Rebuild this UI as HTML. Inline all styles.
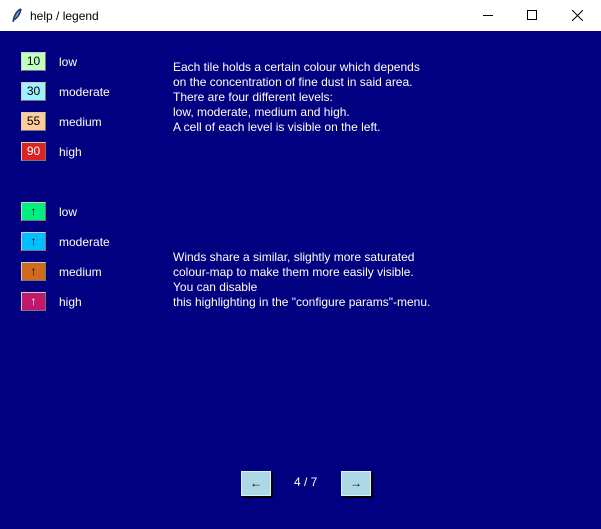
<!DOCTYPE html>
<html><head><style>
*{margin:0;padding:0;box-sizing:border-box}
body{width:601px;height:529px;background:#000080;font-family:"Liberation Sans",sans-serif;position:relative;overflow:hidden;color:#fff}
.title{position:absolute;left:0;top:0;width:601px;height:31px;background:#fff;color:#000;font-size:12px}
.title .t{position:absolute;left:30px;top:9px}
.tile{position:absolute;left:21px;width:25px;height:19px;border:1px solid #ccc;border-right-color:#777;border-bottom-color:#777;color:#000;font-size:12px;text-align:center;line-height:17px}
.lbl{position:absolute;left:59px;font-size:12px;line-height:14px}
.txt{position:absolute;left:173px;font-size:12px;line-height:15px;white-space:pre}
.btn{position:absolute;top:471px;width:30px;height:25px;background:#add8e6;border:1px solid #e0f0f8;box-shadow:1px 1px 0 #000,2px 2px 0 #000;color:#000;font-size:12px;text-align:center;line-height:22px}
</style></head><body>
<div class="title">
<svg style="position:absolute;left:11px;top:8px" width="12" height="15" viewBox="0 0 12 15"><path d="M10 1 C5 3 3 8 2 14 M10 1 C9 6 6 10 3 12" stroke="#1a3a6a" stroke-width="1.5" fill="#6a9ad0"/></svg>
<span class="t">help / legend</span>
<div style="position:absolute;left:483px;top:15px;width:10px;height:1px;background:#000"></div>
<div style="position:absolute;left:527px;top:10px;width:10px;height:10px;border:1px solid #000"></div>
<svg style="position:absolute;left:572px;top:10px" width="11" height="11"><path d="M0 0L11 11M11 0L0 11" stroke="#000" stroke-width="1"/></svg>
</div>

<div class="tile" style="top:52px;background:#c0ffc0">10</div><div class="lbl" style="top:55px">low</div>
<div class="tile" style="top:82px;background:#a0f0ff">30</div><div class="lbl" style="top:85px">moderate</div>
<div class="tile" style="top:112px;background:#ffcc99">55</div><div class="lbl" style="top:115px">medium</div>
<div class="tile" style="top:142px;background:#dd2222;color:#fff">90</div><div class="lbl" style="top:145px">high</div>

<div class="tile" style="top:202px;background:#00f080">↑</div><div class="lbl" style="top:205px">low</div>
<div class="tile" style="top:232px;background:#00c0ff">↑</div><div class="lbl" style="top:235px">moderate</div>
<div class="tile" style="top:262px;background:#d06a20">↑</div><div class="lbl" style="top:265px">medium</div>
<div class="tile" style="top:292px;background:#c0186a;color:#fff">↑</div><div class="lbl" style="top:295px">high</div>

<div class="txt" style="top:60px">Each tile holds a certain colour which depends
on the concentration of fine dust in said area.
There are four different levels:
low, moderate, medium and high.
A cell of each level is visible on the left.</div>
<div class="txt" style="top:250px">Winds share a similar, slightly more saturated
colour-map to make them more easily visible.
You can disable
this highlighting in the "configure params"-menu.</div>

<div class="btn" style="left:241px">←</div>
<div style="position:absolute;left:294px;top:475px;font-size:12px">4 / 7</div>
<div class="btn" style="left:341px">→</div>
</body></html>
